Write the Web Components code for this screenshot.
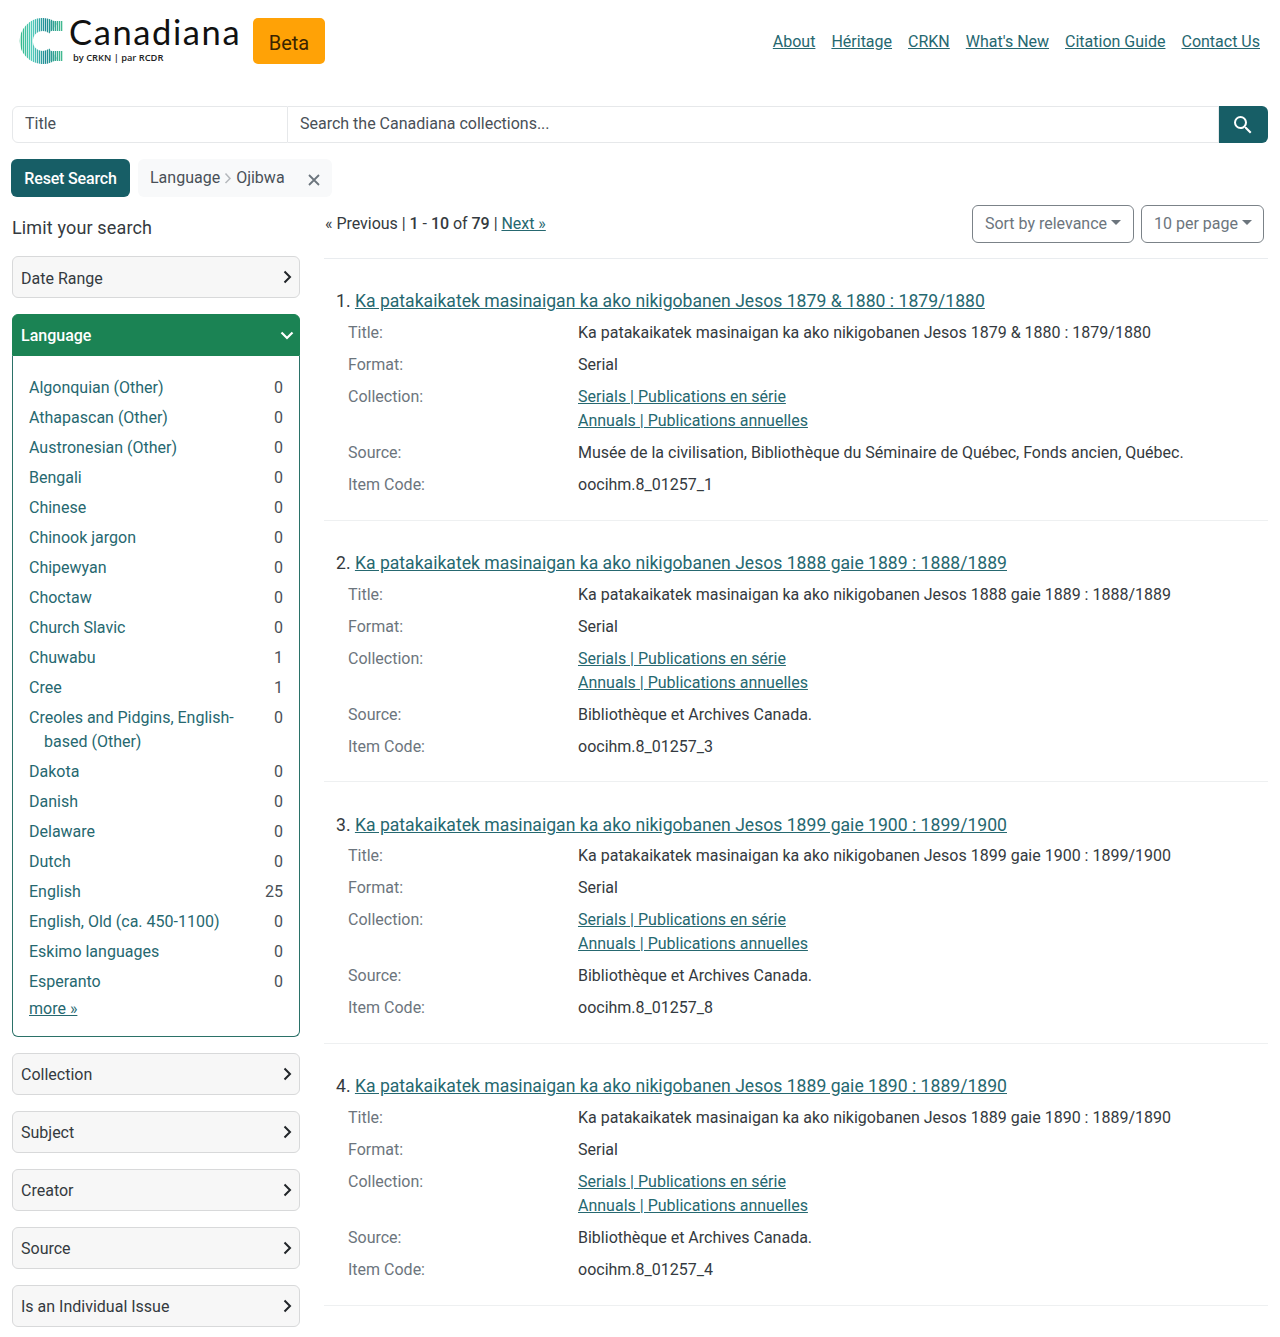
<!DOCTYPE html>
<html lang="en">
<head>
<meta charset="utf-8">
<title>Canadiana</title>
<style>
  html, body {
    margin: 0;
    background: #fff;
    color: #212529;
    font: 400 16px/24px Roboto, "Liberation Sans", sans-serif;
  }
</style>
</head>
<body>
<canadiana-app></canadiana-app>

<script>
const LINK = "#266870";
const TEAL = "#175e66";
const GREEN = "#1b8354";

class SiteHeader extends HTMLElement {
  constructor() {
    super();
    this.shadowDOM = this.attachShadow({ mode: "open" });
  }

  connectedCallback() {
    const links = ["About", "Héritage", "CRKN", "What's New", "Citation Guide", "Contact Us"];
    this.shadowDOM.innerHTML = `
      <style>
        :host { display: flex; align-items: center; justify-content: space-between; height: 46px; padding: 18px 20px 42px 19px; }
        .brand { display: flex; align-items: center; }
        .logo { display: flex; align-items: center; width: 234px; }
        svg { flex: none; margin-right: 6px; }
        .words { display: flex; flex-direction: column; color: #111; margin-top: -4px; }
        .name { font: 400 34.5px/34px Lato, sans-serif; letter-spacing: 1.6px; }
        .by { font: 600 9.3px/12px "Open Sans", sans-serif; margin: 3px 0 0 4px; color: #222; }
        .beta { background: #ffa206; border-radius: 5px; width: 72px; height: 46px; display: flex; align-items: center; justify-content: center; font-size: 20px; padding-top: 4px; box-sizing: border-box; color: #3a2400; }
        nav { display: flex; gap: 16px; padding-top: 2px; }
        a { color: ${LINK}; text-decoration: underline; }
      </style>
      <div class="brand">
        <div class="logo">
          <svg width="44" height="46" viewBox="0 0 44 46">
            <defs>
              <linearGradient id="g" x1="0" y1="0" x2="1" y2="0">
                <stop offset="0" stop-color="#2cb582"/>
                <stop offset=".3" stop-color="#55cdbd"/>
                <stop offset=".6" stop-color="#1f8a94"/>
                <stop offset="1" stop-color="#45bd90"/>
              </linearGradient>
              <pattern id="bars" width="2" height="4" patternUnits="userSpaceOnUse">
                <rect width="1.300" height="4" fill="#fff"/>
              </pattern>
              <mask id="c">
                <path d="M34.500 10.500A16.500 16.500 0 1 0 34.500 35.500" fill="none" stroke="url(#bars)" stroke-width="13"/>
                <rect x="30" y="3" width="14" height="10" fill="url(#bars)"/>
                <rect x="30" y="33" width="14" height="10" fill="url(#bars)"/>
              </mask>
            </defs>
            <rect width="44" height="46" fill="url(#g)" mask="url(#c)"/>
          </svg>
          <div class="words">
            <span class="name">Canadiana</span>
            <span class="by">by CRKN | par RCDR</span>
          </div>
        </div>
        <div class="beta">Beta</div>
      </div>
      <nav>${links.map(l => `<a href="#">${l}</a>`).join("")}</nav>
    `;
  }
}

class SearchBar extends HTMLElement {
  constructor() {
    super();
    this.shadowDOM = this.attachShadow({ mode: "open" });
  }

  connectedCallback() {
    this.shadowDOM.innerHTML = `
      <style>
        :host { display: flex; height: 37px; margin: 0 12px; color: #495057; }
        .field { display: flex; align-items: center; border: 1px solid #e6e8ea; box-sizing: border-box; padding: 0 12px 2px; }
        .scope { width: 276px; border-radius: 6px 0 0 6px; }
        .query { flex: 1; border-left: 0; }
        button { width: 49px; border: 0; background: ${TEAL}; border-radius: 0 6px 6px 0; padding: 0 2px 0 0; display: flex; align-items: center; justify-content: center; }
      </style>
      <div class="field scope">Title</div>
      <div class="field query">Search the Canadiana collections...</div>
      <button aria-label="Search">
        <svg width="24" height="24" viewBox="0 0 24 24" fill="#fff"><path d="M15.500 14h-.79l-.28-.27A6.471 6.471 0 0 0 16 9.500 6.500 6.500 0 1 0 9.500 16c1.610 0 3.090-.59 4.230-1.570l.27.28v.79l5 4.990L20.490 19l-4.990-5zm-6 0C7.010 14 5 11.990 5 9.500S7.010 5 9.500 5 14 7.010 14 9.500 11.990 14 9.500 14z"/></svg>
      </button>
    `;
  }
}

class ActiveFilters extends HTMLElement {
  constructor() {
    super();
    this.shadowDOM = this.attachShadow({ mode: "open" });
  }

  connectedCallback() {
    this.shadowDOM.innerHTML = `
      <style>
        :host { display: flex; gap: 8px; margin: 16px 0 8px 11px; height: 38px; }
        .reset { background: ${TEAL}; color: #fff; border-radius: 6px; width: 119px; padding-top: 2px; box-sizing: border-box; display: flex; align-items: center; justify-content: center; font-weight: 500; letter-spacing: -.17px; }
        .chip { background: #f8f9fa; border-radius: 6px; width: 194px; box-sizing: border-box; padding: 0 12px; display: flex; align-items: center; color: #495057; }
        .sep { margin: 0 4px 0 4px; display: inline-flex; }
        .x { margin-left: auto; display: inline-flex; margin-top: 3px; }
      </style>
      <div class="reset">Reset Search</div>
      <div class="chip">
        Language<span class="sep"><svg width="8" height="12" viewBox="0 0 8 12" fill="none" stroke="#b4b8bc" stroke-width="1.500"><path d="M1.500 1.500 6 6.500 1.500 11"/></svg></span>Ojibwa
        <span class="x"><svg width="12" height="12" viewBox="0 0 12 12" stroke="#6c757d" stroke-width="1.800"><path d="M1 1l10 10M11 1 1 11"/></svg></span>
      </div>
    `;
  }
}

class FacetPanel extends HTMLElement {
  constructor() {
    super();
    this.shadowDOM = this.attachShadow({ mode: "open" });
  }

  connectedCallback() {
    const open = this.hasAttribute("open");
    this.shadowDOM.innerHTML = `
      <style>
        :host { display: block; margin-bottom: 16px; }
        .head { display: flex; align-items: center; justify-content: space-between; height: 42px; box-sizing: border-box; padding: 0 7px 0 8px; border: 1px solid #d8d9da; border-radius: 6px; background: #f7f7f7; color: #343a40; }
        .head span { padding-top: 2px; }
        :host([low]) .head span { padding-top: 4px; }
        .head svg { display: block; }
        :host([open]) .head { background: ${GREEN}; border-color: ${GREEN}; color: #fff; border-radius: 6px 6px 0 0; font-weight: 500; padding-right: 4px; }
        .body { border: 1px solid #2b7168; border-top: 0; border-radius: 0 0 6px 6px; padding: 20px 16px 15px; }
      </style>
      <div class="head">
        <span>${this.getAttribute("label")}</span>
        ${open
          ? `<svg width="16" height="12" viewBox="0 0 16 12" fill="none" stroke="#fff" stroke-width="2.200"><path d="M2.500 3.500 8 9l5.500-5.500"/></svg>`
          : `<svg width="10" height="16" viewBox="0 0 10 16" fill="none" stroke="#212529" stroke-width="2"><path d="M2.500 2.500 8 8l-5.500 5.500"/></svg>`}
      </div>
      ${open ? `<div class="body"><slot></slot></div>` : ""}
    `;
  }
}

class FacetItem extends HTMLElement {
  constructor() {
    super();
    this.shadowDOM = this.attachShadow({ mode: "open" });
  }

  connectedCallback() {
    this.shadowDOM.innerHTML = `
      <style>
        :host { display: flex; justify-content: space-between; margin-bottom: 6px; }
        .name { color: ${LINK}; width: 220px; padding-left: 15px; text-indent: -15px; }
        .count { color: #495057; }
      </style>
      <span class="name"><slot></slot></span>
      <span class="count">${this.getAttribute("count")}</span>
    `;
  }
}

class PagerBar extends HTMLElement {
  constructor() {
    super();
    this.shadowDOM = this.attachShadow({ mode: "open" });
  }

  connectedCallback() {
    this.shadowDOM.innerHTML = `
      <style>
        :host { display: flex; align-items: center; justify-content: space-between; padding: 0 4px 15px 1px; border-bottom: 1px solid #e9ecef; }
        a { color: ${LINK}; }
        b { font-weight: 500; }
        .pages { color: #343a40; letter-spacing: -.03px; }
        .sorts { display: flex; gap: 7px; }
        .drop { display: flex; align-items: center; gap: 4px; height: 38px; box-sizing: border-box; padding: 0 12px; border: 1px solid #7b8288; border-radius: 6px; color: #6c757d; }
        .drop + .drop { padding-right: 11px; }
        .drop::after { content: ""; border-top: 5px solid #6c757d; border-left: 5px solid transparent; border-right: 5px solid transparent; margin-top: -3px; }
      </style>
      <div class="pages">« Previous | <b>1</b> - <b>10</b> of <b>79</b> | <a href="#">Next »</a></div>
      <div class="sorts">
        <div class="drop">Sort by relevance</div>
        <div class="drop">10 per page</div>
      </div>
    `;
  }
}

class ResultItem extends HTMLElement {
  constructor() {
    super();
    this.shadowDOM = this.attachShadow({ mode: "open" });
  }

  connectedCallback() {
    const title = this.getAttribute("title");
    const rows = [
      ["Title:", title],
      ["Format:", "Serial"],
      ["Collection:", `<a href="#">Serials | Publications en série</a><br><a href="#">Annuals | Publications annuelles</a>`],
      ["Source:", this.getAttribute("source")],
      ["Item Code:", this.getAttribute("code")],
    ];
    this.shadowDOM.innerHTML = `
      <style>
        :host { display: block; padding: 29.300px 0 22.670px; border-bottom: 1px solid #eef0f1; }
        h3 { margin: 0 0 6.300px 12px; font-size: 17.600px; line-height: 26.400px; font-weight: 400; color: #343a40; }
        h3 a { color: ${LINK}; }
        a { color: ${LINK}; }
        dl { margin: 0 0 0 24px; display: grid; grid-template-columns: 230px 1fr; row-gap: 8px; color: #343a40; }
        dt { color: #6c757d; }
        dd { margin: 0; }
      </style>
      <h3>${this.getAttribute("num")}. <a href="#">${title}</a></h3>
      <dl>${rows.map(r => `<dt>${r[0]}</dt><dd>${r[1]}</dd>`).join("")}</dl>
    `;
  }
}

class CanadianaApp extends HTMLElement {
  constructor() {
    super();
    this.shadowDOM = this.attachShadow({ mode: "open" });
  }

  connectedCallback() {
    const langs = [
      ["Algonquian (Other)", 0], ["Athapascan (Other)", 0], ["Austronesian (Other)", 0], ["Bengali", 0],
      ["Chinese", 0], ["Chinook jargon", 0], ["Chipewyan", 0], ["Choctaw", 0], ["Church Slavic", 0],
      ["Chuwabu", 1], ["Cree", 1], ["Creoles and Pidgins, English-based (Other)", 0], ["Dakota", 0],
      ["Danish", 0], ["Delaware", 0], ["Dutch", 0], ["English", 25], ["English, Old (ca. 450-1100)", 0],
      ["Eskimo languages", 0], ["Esperanto", 0],
    ];
    const base = "Ka patakaikatek masinaigan ka ako nikigobanen Jesos ";
    const bac = "Bibliothèque et Archives Canada.";
    const results = [
      [base + "1879 &amp; 1880 : 1879/1880", "Musée de la civilisation, Bibliothèque du Séminaire de Québec, Fonds ancien, Québec.", "oocihm.8_01257_1"],
      [base + "1888 gaie 1889 : 1888/1889", bac, "oocihm.8_01257_3"],
      [base + "1899 gaie 1900 : 1899/1900", bac, "oocihm.8_01257_8"],
      [base + "1889 gaie 1890 : 1889/1890", bac, "oocihm.8_01257_4"],
    ];
    this.shadowDOM.innerHTML = `
      <style>
        :host { display: block; }
        .cols { display: grid; grid-template-columns: 288px 944px; column-gap: 24px; padding: 0 12px 10px; }
        aside { padding-top: 8.500px; }
        h2 { margin: 0 0 15.500px; font-size: 18px; line-height: 27px; font-weight: 400; color: #343a40; letter-spacing: .15px; }
        facet-panel:last-child { margin-bottom: 0; }
        .more { color: ${LINK}; display: block; margin-top: -3px; }
      </style>
      <site-header></site-header>
      <search-bar></search-bar>
      <active-filters></active-filters>
      <div class="cols">
        <aside>
          <h2>Limit your search</h2>
          <facet-panel label="Date Range" low></facet-panel>
          <facet-panel label="Language" open>
            ${langs.map(l => `<facet-item count="${l[1]}">${l[0]}</facet-item>`).join("")}
            <a class="more" href="#">more »</a>
          </facet-panel>
          <facet-panel label="Collection"></facet-panel>
          <facet-panel label="Subject"></facet-panel>
          <facet-panel label="Creator"></facet-panel>
          <facet-panel label="Source"></facet-panel>
          <facet-panel label="Is an Individual Issue"></facet-panel>
        </aside>
        <main>
          <pager-bar></pager-bar>
          ${results.map((r, i) => `<result-item num="${i + 1}" title="${r[0]}" source="${r[1]}" code="${r[2]}"></result-item>`).join("")}
        </main>
      </div>
    `;
  }
}

customElements.define("site-header", SiteHeader);
customElements.define("search-bar", SearchBar);
customElements.define("active-filters", ActiveFilters);
customElements.define("facet-panel", FacetPanel);
customElements.define("facet-item", FacetItem);
customElements.define("pager-bar", PagerBar);
customElements.define("result-item", ResultItem);
customElements.define("canadiana-app", CanadianaApp);
</script>
</body>
</html>
